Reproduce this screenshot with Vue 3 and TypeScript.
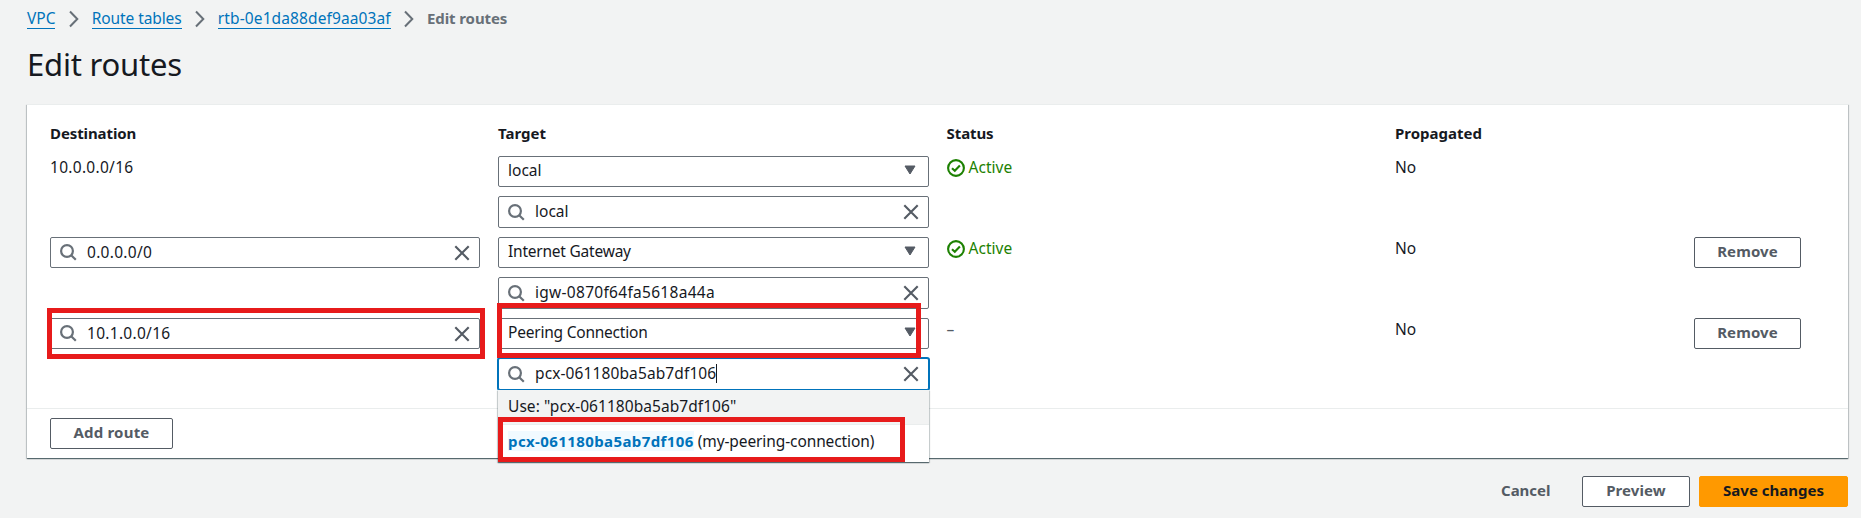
<script setup lang="ts">
interface Route {
  destination: string
  editable: boolean
  targetType: string
  target: string
  active: boolean
  typeClass: string
  targetClass: string
  destClass: string
  focused: boolean
}

const crumbs = [
  { label: 'VPC', cls: '' },
  { label: 'Route tables', cls: 'sp-n1' },
  { label: 'rtb-0e1da88def9aa03af', cls: 'sp-p1' },
]

const routes: Route[] = [
  { destination: '10.0.0.0/16', editable: false, targetType: 'local', target: 'local', active: true, typeClass: '', targetClass: '', destClass: 'sp-p3', focused: false },
  { destination: '0.0.0.0/0', editable: true, targetType: 'Internet Gateway', target: 'igw-0870f64fa5618a44a', active: true, typeClass: 'sp-n2', targetClass: 'sp-p3', destClass: 'sp-p3', focused: false },
  { destination: '10.1.0.0/16', editable: true, targetType: 'Peering Connection', target: 'pcx-061180ba5ab7df106', active: false, typeClass: 'sp-n2', targetClass: 'sp-p1', destClass: 'sp-p3', focused: true },
]
</script>

<template>
  <div class="page">
    <nav class="crumbs">
      <template v-for="c in crumbs" :key="c.label">
        <a class="link" :class="c.cls">{{ c.label }}</a>
        <svg class="chev" viewBox="0 0 10 18"><path d="M1 1.5 8.3 9 1 16.5" /></svg>
      </template>
      <span class="current">Edit routes</span>
    </nav>
    <h1>Edit routes</h1>

    <section class="card">
      <div class="grid head">
        <div class="sp-n1">Destination</div>
        <div>Target</div>
        <div class="sp-n1">Status</div>
        <div>Propagated</div>
      </div>
      <div v-for="r in routes" :key="r.destination" class="grid row">
        <div class="cell">
          <div v-if="r.editable" class="field dest" :class="{ marked: r.focused }">
            <svg class="search" viewBox="0 0 17 17"><circle cx="7" cy="7" r="5.9" /><path d="m11.2 11.2 4.6 4.6" /></svg>
            <span :class="r.destClass">{{ r.destination }}</span>
            <svg class="close" viewBox="0 0 16 16"><path d="m1.3 1.3 13.4 13.4M14.7 1.3 1.3 14.7" /></svg>
          </div>
          <div v-else class="plain" :class="r.destClass">{{ r.destination }}</div>
        </div>
        <div class="cell targets">
          <div class="field select" :class="{ marked: r.focused }">
            <span :class="r.typeClass">{{ r.targetType }}</span>
            <svg class="caret" viewBox="0 0 12 10"><path d="M1 1h10L6 9z" /></svg>
          </div>
          <div class="field lookup" :class="{ focused: r.focused }">
            <svg class="search" viewBox="0 0 17 17"><circle cx="7" cy="7" r="5.9" /><path d="m11.2 11.2 4.6 4.6" /></svg>
            <span :class="r.targetClass">{{ r.target }}</span><i v-if="r.focused" class="cursor"></i>
            <svg class="close" viewBox="0 0 16 16"><path d="m1.3 1.3 13.4 13.4M14.7 1.3 1.3 14.7" /></svg>
            <div v-if="r.focused" class="menu">
              <div class="option first">Use: "pcx-061180ba5ab7df106"</div>
              <div class="option second marked">
                <b>pcx-061180ba5ab7df106</b><em class="sp-n1">(my-peering-connection)</em>
              </div>
            </div>
          </div>
        </div>
        <div class="cell">
          <div v-if="r.active" class="plain active">
            <svg viewBox="0 0 18 18"><circle cx="9" cy="9" r="7.9" /><path d="m5 9.2 2.8 2.6L12.9 6.6" /></svg>
            <span>Active</span>
          </div>
          <div v-else class="plain dash">–</div>
        </div>
        <div class="cell plain">No</div>
        <div class="cell"><button v-if="r.editable" class="btn remove">Remove</button></div>
      </div>
      <div class="add"><button class="btn add-route">Add route</button></div>
    </section>

    <footer>
      <button class="btn bare">Cancel</button>
      <button class="btn preview">Preview</button>
      <button class="btn primary">Save changes</button>
    </footer>
  </div>
</template>

<style>
body {
  background: #f2f3f3;
}
</style>

<style scoped>
.page {
  box-sizing: border-box;
  width: 1861px;
  height: 518px;
  overflow: hidden;
  padding: 8px 13px 0 27px;
  background: #f2f3f3;
  color: #16191f;
  font: 400 15.5px/22px 'Noto Sans', 'Open Sans', sans-serif;
  white-space: nowrap;
}
svg {
  display: block;
  flex: none;
  fill: none;
}
.sp-n2 { letter-spacing: -0.22px; }
.sp-n1 { letter-spacing: -0.1px; }
.sp-p1 { letter-spacing: 0.11px; }
.sp-p3 { letter-spacing: 0.29px; }
.crumbs {
  display: flex;
  height: 22px;
}
.link {
  box-sizing: border-box;
  height: 21px;
  line-height: 21px;
  border-bottom: 1px solid #0073bb;
  color: #0073bb;
}
.chev {
  width: 10px;
  height: 18px;
  margin: 2px 13px 0 13.3px;
  stroke: #687078;
  stroke-width: 2;
}
.current {
  color: #687078;
  font-size: 15px;
  font-weight: 700;
  line-height: 20px;
  letter-spacing: -0.1px;
}
h1 {
  height: 40px;
  margin: 14px 0 20px;
  font-size: 31px;
  font-weight: 400;
  line-height: 40px;
  letter-spacing: -0.2px;
}
.card {
  box-sizing: border-box;
  width: 1821px;
  height: 354px;
  border-top: 1px solid #eaeded;
  background: #fff;
  box-shadow: 0 1px 1px 0 rgba(0, 28, 36, 0.5), 1px 1px 1px 0 rgba(0, 28, 36, 0.15), -1px 1px 1px 0 rgba(0, 28, 36, 0.15);
}
.grid {
  display: grid;
  grid-template-columns: 448px 448.6px 448.4px 299px 127px;
  padding-left: 23px;
}
.head {
  height: 51px;
  box-sizing: border-box;
  padding-top: 17px;
  font-size: 15px;
  font-weight: 700;
}
.row {
  height: 81px;
}
.field {
  position: relative;
  box-sizing: border-box;
  display: flex;
  align-items: center;
  width: 431px;
  height: 31px;
  border: 1px solid #687078;
  border-radius: 2px;
  background: #fff;
}
.dest {
  width: 430px;
}
.targets {
  display: flex;
  flex-direction: column;
  gap: 9px;
}
.select {
  padding: 0 12px 3px 9px;
}
.lookup,
.dest {
  padding: 0 9px;
}
.lookup {
  height: 32px;
}
.dest span {
  margin-top: -1px;
}
.lookup > span {
  margin-top: -2px;
}
.search {
  width: 17px;
  height: 17px;
  margin-right: 10px;
  stroke: #687078;
  stroke-width: 2.2;
}
.close {
  width: 16px;
  height: 16px;
  margin-left: auto;
  stroke: #545b64;
  stroke-width: 2.1;
}
.caret {
  width: 12px;
  height: 10px;
  margin-left: auto;
  fill: #545b64;
  stroke: #545b64;
  stroke-linejoin: round;
}
.focused {
  border-color: #0073bb;
  box-shadow: 0 0 0 1px #0073bb;
}
.cursor {
  width: 1px;
  height: 19px;
  margin-top: -1px;
  background: #16191f;
}
.active {
  display: flex;
  align-items: center;
  gap: 4px;
  color: #1d8102;
}
.active svg {
  width: 18px;
  height: 18px;
  margin-top: 2px;
  stroke: #1d8102;
  stroke-width: 2.1;
}
.dash {
  color: #545b64;
}
/* Red callouts drawn over the fields */
.marked::after {
  content: '';
  position: absolute;
  z-index: 3;
  box-sizing: border-box;
  border: 5px solid #e71b1b;
}
.dest.marked::after {
  inset: -11px -6px -11px -4px;
}
.select.marked::after {
  inset: -16px 7px -10px -2px;
}
.menu {
  position: absolute;
  z-index: 2;
  top: 31px;
  left: -1px;
  width: 431px;
  height: 72px;
  background: #fff;
  box-shadow: 0 1px 1px 0 rgba(0, 28, 36, 0.5), 1px 1px 1px 0 rgba(0, 28, 36, 0.15), -1px 1px 1px 0 rgba(0, 28, 36, 0.15);
}
.option {
  position: relative;
  box-sizing: border-box;
  display: flex;
  align-items: center;
  padding-left: 10px;
}
.first {
  height: 35px;
  padding-bottom: 2px;
  border-bottom: 1px solid #eaeded;
  background: #f2f3f3;
  letter-spacing: 0.05px;
}
.second {
  height: 37px;
  padding-bottom: 5px;
}
.second b {
  height: 20px;
  margin-right: 4px;
  background: #f1faff;
  color: #0073bb;
  font-size: 15px;
  line-height: 20px;
  letter-spacing: 0.4px;
}
.second em {
  font-style: normal;
}
.second.marked::after {
  inset: -8px 24px 0 0;
}
.btn {
  box-sizing: border-box;
  display: block;
  height: 31px;
  padding: 0 0 3px;
  border: 1px solid #545b64;
  border-radius: 2px;
  background: #fff;
  color: #545b64;
  font: 700 15px/26px 'Noto Sans', 'Open Sans', sans-serif;
  letter-spacing: 0.1px;
}
.remove {
  width: 107px;
}
.add {
  box-sizing: border-box;
  height: 51px;
  margin-top: 9px;
  padding: 9px 0 0 23px;
  border-top: 1px solid #eaeded;
}
.add-route {
  width: 123px;
  letter-spacing: 0.2px;
}
footer {
  display: flex;
  justify-content: flex-end;
  margin-top: 18px;
}
.bare {
  width: 49px;
  margin-right: 33px;
  border-color: transparent;
  background: none;
  letter-spacing: 0;
}
.preview {
  width: 108px;
  margin-right: 9px;
}
.primary {
  width: 149px;
  border-color: #f90;
  background: #f90;
  color: #16191f;
  letter-spacing: 0;
}
</style>
